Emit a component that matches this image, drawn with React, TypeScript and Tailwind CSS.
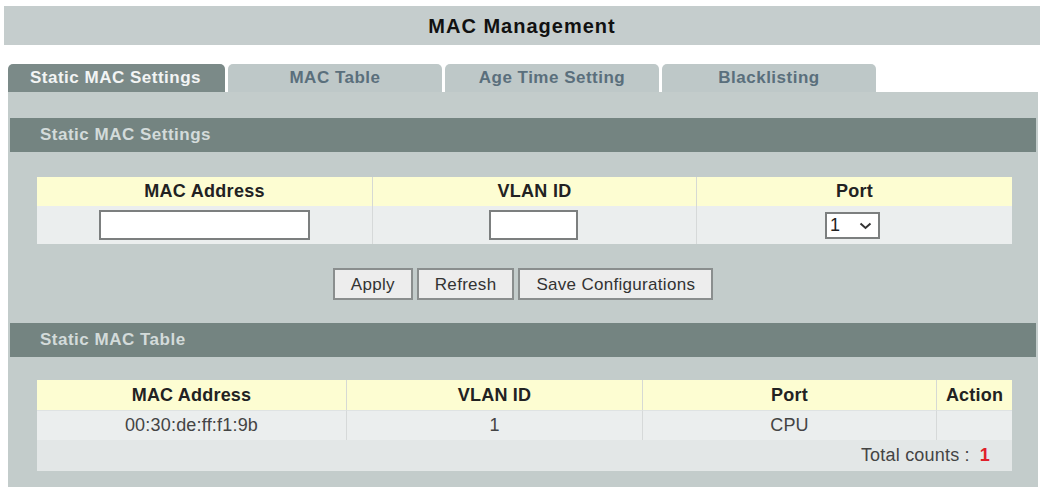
const tabs = ["Static MAC Settings", "MAC Table", "Age Time Setting", "Blacklisting"];

const rows = [{ mac: "00:30:de:ff:f1:9b", vlan: "1", port: "CPU", action: "" }];

function SectionBar({ title }: { title: string }) {
  return (
    <div className="h-[34px] mx-[2px] bg-[#748481] flex items-center pl-[30px] text-[17px] tracking-[0.5px] font-bold text-[#d3dbda]">
      {title}
    </div>
  );
}

function Button({ label }: { label: string }) {
  return (
    <button className="h-[32px] px-[16px] bg-[#ededed] border-2 border-[#8a8e8e] text-[17px] tracking-[0.3px] text-[#333] leading-none">
      {label}
    </button>
  );
}

export default function App() {
  return (
    <div className="w-[1043px] h-[487px] bg-white pt-[6px] font-['Liberation_Sans',Arial,sans-serif] overflow-hidden">
      {/* Page title */}
      <div className="ml-[4px] mr-[3px] h-[39px] bg-[#c5cdcd] flex items-center justify-center text-[20px] tracking-[1px] font-bold text-[#111]">
        MAC Management
      </div>

      {/* Tabs */}
      <div className="mt-[19px] ml-[8px] flex gap-[3px] h-[28px]">
        {tabs.map((t, i) => (
          <div
            key={t}
            className={
              i === 0
                ? "w-[217px] rounded-t-[5px] bg-[#7b8a88] text-[#f2f4f4] font-bold text-[17px] tracking-[0.5px] flex items-center pl-[22px]"
                : "w-[214px] rounded-t-[5px] bg-[#bec8c8] text-[#5a6f7c] font-bold text-[17px] tracking-[0.5px] flex items-center justify-center"
            }
          >
            {t}
          </div>
        ))}
      </div>

      {/* Panel */}
      <div className="ml-[8px] w-[1030px] h-[400px] bg-[#c3cccb] pt-[26px]">
        <SectionBar title="Static MAC Settings" />

        <div className="mt-[25px] ml-[29px] w-[975px]">
          <div className="grid grid-cols-[336px_324px_315px] text-[18px] tracking-[0.3px]">
            <div className="h-[29px] bg-[#fdfdd2] border-r border-[#d6d9d4] flex items-center justify-center font-bold text-[#222]">
              MAC Address
            </div>
            <div className="h-[29px] bg-[#fdfdd2] border-r border-[#d6d9d4] flex items-center justify-center font-bold text-[#222]">
              VLAN ID
            </div>
            <div className="h-[29px] bg-[#fdfdd2] flex items-center justify-center font-bold text-[#222]">
              Port
            </div>
            <div className="h-[38px] bg-[#ebeeee] border-r border-[#d6d9d9] flex items-center pl-[62px]">
              <input className="w-[211px] h-[30px] bg-white border-2 border-[#7c7f7f] outline-none" />
            </div>
            <div className="h-[38px] bg-[#ebeeee] border-r border-[#d6d9d9] flex items-center pl-[116px]">
              <input className="w-[89px] h-[30px] bg-white border-2 border-[#7c7f7f] outline-none" />
            </div>
            <div className="h-[38px] bg-[#ebeeee] flex items-center pl-[128px]">
              <div className="relative w-[55px] h-[27px] bg-white border-2 border-[#7c7f7f] flex items-center pl-[3px] text-[18px] text-[#222]">
                1
                <svg className="absolute right-[6px] top-[8px]" width="13" height="8" viewBox="0 0 13 8">
                  <path d="M1.5 1.5 L6.5 6 L11.5 1.5" fill="none" stroke="#333" strokeWidth="2" />
                </svg>
              </div>
            </div>
          </div>
        </div>

        <div className="mt-[24px] flex justify-center gap-[4px]">
          <Button label="Apply" />
          <Button label="Refresh" />
          <Button label="Save Configurations" />
        </div>

        <div className="mt-[23px]">
          <SectionBar title="Static MAC Table" />
        </div>

        <div className="mt-[23px] ml-[29px] w-[975px] text-[18px] tracking-[0.2px]">
          <div className="grid grid-cols-[310px_296px_294px_75px]">
            {["MAC Address", "VLAN ID", "Port", "Action"].map((h, i) => (
              <div
                key={h}
                className={
                  i < 3
                    ? "h-[30px] bg-[#fdfdd2] border-r border-[#d6d9d4] flex items-center justify-center font-bold text-[#222]"
                    : "h-[30px] bg-[#fdfdd2] flex items-center justify-center font-bold text-[#222]"
                }
              >
                {h}
              </div>
            ))}
            {rows.map((r) => (
              <div key={r.mac} className="contents">
                <div className="h-[30px] bg-[#ebeeee] border-r border-[#d6d9d9] border-t border-t-[#dfe3e3] flex items-center justify-center text-[#444]">
                  {r.mac}
                </div>
                <div className="h-[30px] bg-[#ebeeee] border-r border-[#d6d9d9] border-t border-t-[#dfe3e3] flex items-center justify-center text-[#444]">
                  {r.vlan}
                </div>
                <div className="h-[30px] bg-[#ebeeee] border-r border-[#d6d9d9] border-t border-t-[#dfe3e3] flex items-center justify-center text-[#444]">
                  {r.port}
                </div>
                <div className="h-[30px] bg-[#ebeeee] border-t border-t-[#dfe3e3] flex items-center justify-center text-[#444]">
                  {r.action}
                </div>
              </div>
            ))}
          </div>
          <div className="h-[31px] bg-[#e3e7e7] flex items-center justify-end pr-[22px] text-[#444]">
            Total counts :<span className="ml-[10px] font-bold text-[#e0202a]">{rows.length}</span>
          </div>
        </div>
      </div>
    </div>
  );
}
